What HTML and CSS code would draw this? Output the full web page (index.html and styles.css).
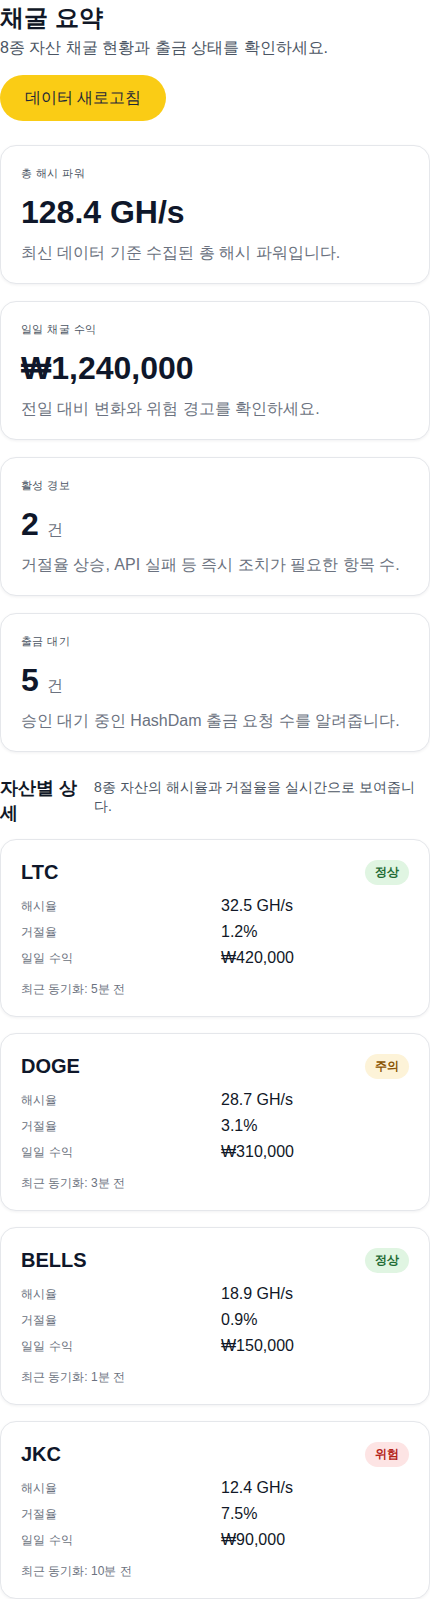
FILE: index.html
```html
<!DOCTYPE html>
<html lang="ko">
<head>
<meta charset="utf-8">
<title>채굴 요약</title>
<link rel="stylesheet" href="styles.css">
</head>
<body>
<main class="page">
  <header class="page-head">
    <h1 class="title">채굴 요약</h1>
    <p class="subtitle">8종 자산 채굴 현황과 출금 상태를 확인하세요.</p>
    <button class="refresh" type="button">데이터 새로고침</button>
  </header>

  <section class="summary">
    <article class="stat-card">
      <div class="stat-label">총 해시 파워</div>
      <div class="stat-value">128.4 GH/s</div>
      <p class="stat-desc">최신 데이터 기준 수집된 총 해시 파워입니다.</p>
    </article>
    <article class="stat-card">
      <div class="stat-label">일일 채굴 수익</div>
      <div class="stat-value">₩1,240,000</div>
      <p class="stat-desc">전일 대비 변화와 위험 경고를 확인하세요.</p>
    </article>
    <article class="stat-card">
      <div class="stat-label">활성 경보</div>
      <div class="stat-value">2<span class="unit">건</span></div>
      <p class="stat-desc">거절율 상승, API 실패 등 즉시 조치가 필요한 항목 수.</p>
    </article>
    <article class="stat-card">
      <div class="stat-label">출금 대기</div>
      <div class="stat-value">5<span class="unit">건</span></div>
      <p class="stat-desc">승인 대기 중인 HashDam 출금 요청 수를 알려줍니다.</p>
    </article>
  </section>

  <section class="assets">
    <div class="section-head">
      <h2 class="section-title">자산별 상세</h2>
      <p class="section-desc">8종 자산의 해시율과 거절율을 실시간으로 보여줍니다.</p>
    </div>

    <div class="asset-list">
      <article class="asset-card">
        <div class="asset-head">
          <h3 class="asset-name">LTC</h3>
          <span class="badge badge-ok">정상</span>
        </div>
        <dl class="asset-stats">
          <dt>해시율</dt><dd>32.5 GH/s</dd>
          <dt>거절율</dt><dd>1.2%</dd>
          <dt>일일 수익</dt><dd>₩420,000</dd>
        </dl>
        <div class="asset-sync">최근 동기화: 5분 전</div>
      </article>
      <article class="asset-card">
        <div class="asset-head">
          <h3 class="asset-name">DOGE</h3>
          <span class="badge badge-warn">주의</span>
        </div>
        <dl class="asset-stats">
          <dt>해시율</dt><dd>28.7 GH/s</dd>
          <dt>거절율</dt><dd>3.1%</dd>
          <dt>일일 수익</dt><dd>₩310,000</dd>
        </dl>
        <div class="asset-sync">최근 동기화: 3분 전</div>
      </article>
      <article class="asset-card">
        <div class="asset-head">
          <h3 class="asset-name">BELLS</h3>
          <span class="badge badge-ok">정상</span>
        </div>
        <dl class="asset-stats">
          <dt>해시율</dt><dd>18.9 GH/s</dd>
          <dt>거절율</dt><dd>0.9%</dd>
          <dt>일일 수익</dt><dd>₩150,000</dd>
        </dl>
        <div class="asset-sync">최근 동기화: 1분 전</div>
      </article>
      <article class="asset-card">
        <div class="asset-head">
          <h3 class="asset-name">JKC</h3>
          <span class="badge badge-danger">위험</span>
        </div>
        <dl class="asset-stats">
          <dt>해시율</dt><dd>12.4 GH/s</dd>
          <dt>거절율</dt><dd>7.5%</dd>
          <dt>일일 수익</dt><dd>₩90,000</dd>
        </dl>
        <div class="asset-sync">최근 동기화: 10분 전</div>
      </article>
    </div>
  </section>
</main>
</body>
</html>
```

FILE: styles.css
```css
* {
  box-sizing: border-box;
}

html, body {
  margin: 0;
  padding: 0;
  background: #ffffff;
}

body {
  font-family: "Liberation Sans", Arial, sans-serif;
  color: #111827;
}

.page {
  width: 430px;
  display: flex;
  flex-direction: column;
}

.page-head {
  display: flex;
  flex-direction: column;
  align-items: flex-start;
}

.title {
  margin: 0;
  font-size: 24px;
  line-height: 35px;
  font-weight: 700;
  color: #111827;
}

.subtitle {
  margin: 0;
  font-size: 16px;
  line-height: 25px;
  color: #4b5563;
}

.refresh {
  margin-top: 15px;
  height: 46px;
  padding: 0 25px;
  border: none;
  border-radius: 999px;
  background: #facc15;
  color: #1f2937;
  font-family: inherit;
  font-size: 16px;
  line-height: 22px;
}

.summary {
  margin-top: 24px;
  display: flex;
  flex-direction: column;
  gap: 17px;
}

.stat-card {
  border: 1px solid #e5e7eb;
  border-radius: 16px;
  padding: 20px 20px 19px;
  background: #ffffff;
  box-shadow: 0 1px 3px rgba(15, 23, 42, 0.06);
}

.stat-label {
  font-size: 11px;
  line-height: 14px;
  letter-spacing: 0.04em;
  color: #4b5563;
}

.stat-value {
  margin-top: 13px;
  display: flex;
  align-items: baseline;
  font-size: 32px;
  line-height: 38px;
  font-weight: 700;
  color: #0f172a;
}

.unit {
  margin-left: 8px;
  font-size: 16px;
  line-height: 16px;
  font-weight: 400;
  color: #6b7280;
}

.stat-desc {
  margin: 11px 0 0;
  font-size: 16px;
  line-height: 22px;
  color: #6b7280;
}

.assets {
  margin-top: 24px;
  display: flex;
  flex-direction: column;
}

.section-head {
  display: flex;
  align-items: flex-start;
  gap: 16px;
  padding-right: 12px;
}

.section-title {
  flex: 0 0 78px;
  margin: 0;
  font-size: 18px;
  line-height: 25px;
  font-weight: 700;
  color: #111827;
}

.section-desc {
  flex: 1 1 auto;
  margin: 2px 0 0;
  font-size: 14px;
  line-height: 19px;
  color: #4b5563;
}

.asset-list {
  margin-top: 13px;
  display: flex;
  flex-direction: column;
  gap: 16px;
}

.asset-card {
  border: 1px solid #e5e7eb;
  border-radius: 16px;
  padding: 20px 20px 19px;
  background: #ffffff;
  box-shadow: 0 1px 3px rgba(15, 23, 42, 0.06);
}

.asset-head {
  display: flex;
  align-items: center;
  justify-content: space-between;
  height: 25px;
}

.asset-name {
  margin: 0;
  font-size: 20px;
  line-height: 25px;
  font-weight: 700;
  color: #0f172a;
}

.badge {
  padding: 4px 10px;
  border-radius: 999px;
  font-size: 12px;
  line-height: 17px;
  font-weight: 700;
}

.badge-ok {
  background: #e0f5e2;
  color: #1e6b34;
}

.badge-warn {
  background: #fdf3d8;
  color: #8a5300;
}

.badge-danger {
  background: #fde4e4;
  color: #b42318;
}

.asset-stats {
  margin: 10px 0 0;
  display: grid;
  grid-template-columns: 1fr 1fr;
  column-gap: 12px;
  row-gap: 4px;
  align-items: center;
}

.asset-stats dt {
  font-size: 12px;
  line-height: 22px;
  letter-spacing: 0.02em;
  color: #6b7280;
}

.asset-stats dd {
  margin: 0;
  font-size: 16px;
  line-height: 22px;
  color: #111827;
}

.asset-sync {
  margin-top: 12px;
  font-size: 12px;
  line-height: 16px;
  color: #6b7280;
}
```
